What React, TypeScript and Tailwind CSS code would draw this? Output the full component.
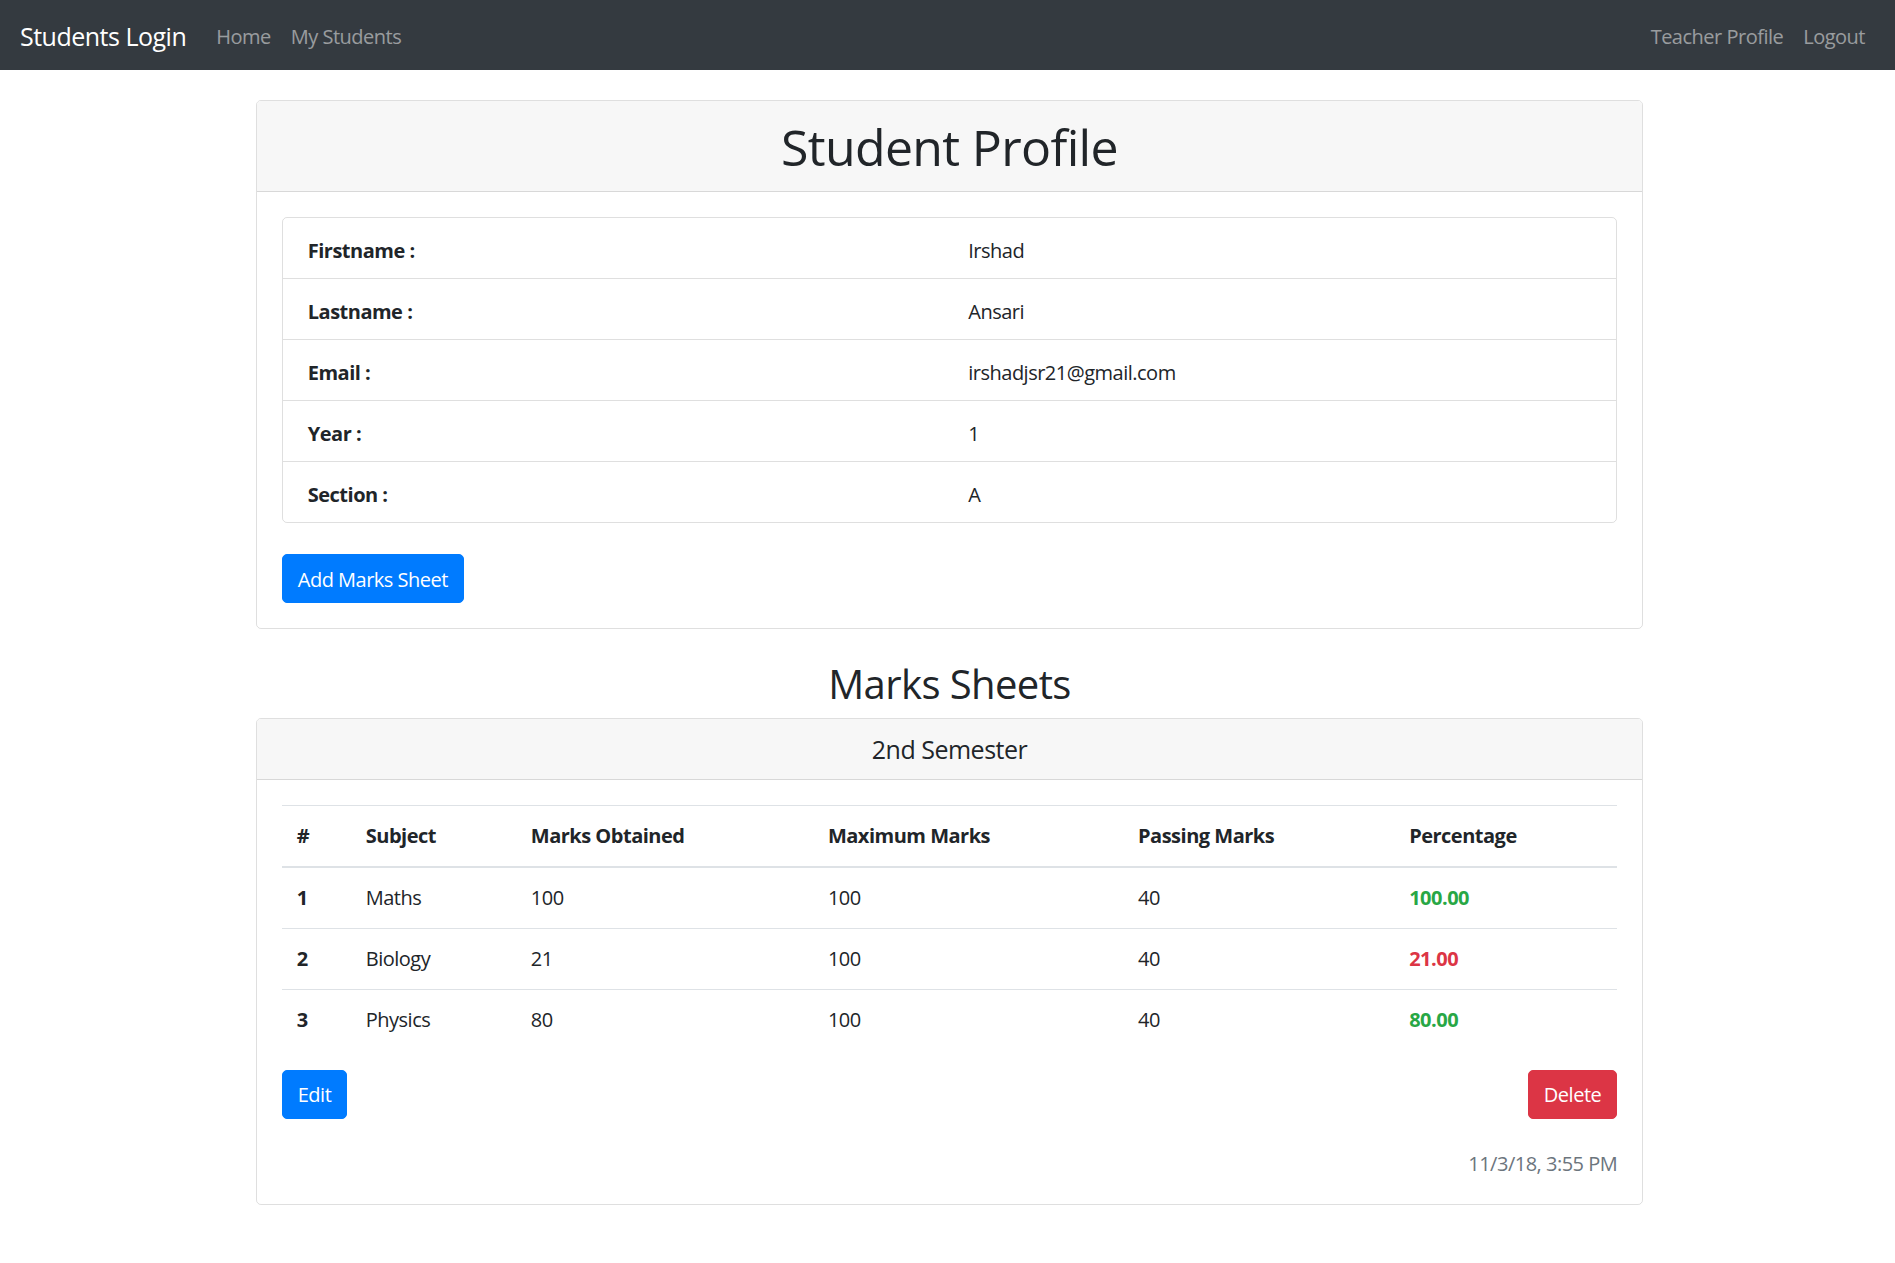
import React from "react";

const rows = [
  { label: "Firstname :", value: "Irshad" },
  { label: "Lastname :", value: "Ansari" },
  { label: "Email :", value: "irshadjsr21@gmail.com" },
  { label: "Year :", value: "1" },
  { label: "Section :", value: "A" },
];

const marks = [
  { n: "1", subject: "Maths", obtained: "100", max: "100", pass: "40", pct: "100.00", ok: true },
  { n: "2", subject: "Biology", obtained: "21", max: "100", pass: "40", pct: "21.00", ok: false },
  { n: "3", subject: "Physics", obtained: "80", max: "100", pass: "40", pct: "80.00", ok: true },
];

export default function App() {
  return (
    <div
      className="min-h-screen bg-white text-[#212529] text-[20px] leading-[30px] tracking-[-0.025em]"
      style={{ fontFamily: '"Segoe UI", "Open Sans", "Noto Sans", sans-serif' }}
    >
      <nav className="h-[70px] bg-[#343a40] px-[20px] pt-[4px] flex items-center justify-between">
        <div className="flex items-center">
          <span className="text-[25px] leading-[37.5px] text-white mr-[20px]">Students Login</span>
          <span className="px-[10px] text-white/50">Home</span>
          <span className="px-[10px] text-white/50">My Students</span>
        </div>
        <div className="flex items-center">
          <span className="px-[10px] text-white/50">Teacher Profile</span>
          <span className="px-[10px] text-white/50">Logout</span>
        </div>
      </nav>

      <div className="mx-auto max-w-[1425px] pl-[20.75px] pr-[16.75px]">
        <div className="mt-[30px] border border-black/[.125] rounded-[5px] overflow-hidden">
          <div className="bg-[#f7f7f7] px-[25px] pt-[16px] pb-[14px] border-b border-black/[.125]">
            <h1 className="text-[50px] leading-[60px] font-normal text-center tracking-[-0.013em]">Student Profile</h1>
          </div>
          <div className="p-[25px]">
            <div className="border border-black/[.125] rounded-[5px]">
              {rows.map((r, i) => (
                <div
                  key={r.label}
                  className={`flex px-[25px] pt-[17.5px] pb-[12.5px] ${i > 0 ? "border-t border-black/[.125]" : ""}`}
                >
                  <div className="w-1/2 font-bold">{r.label}</div>
                  <div className="w-1/2 pl-[18.75px]">{r.value}</div>
                </div>
              ))}
            </div>
            <button className="mt-[31px] bg-[#007bff] text-white rounded-[5px] px-[15px] pt-[9.5px] pb-[7.5px] border border-[#007bff]">
              Add Marks Sheet
            </button>
          </div>
        </div>

        <h2 className="mt-[31px] mb-[10px] text-[40px] leading-[48px] font-normal text-center tracking-[-0.015em]">Marks Sheets</h2>

        <div className="border border-black/[.125] rounded-[5px] overflow-hidden mb-[60px]">
          <div className="bg-[#f7f7f7] px-[25px] py-[15px] border-b border-black/[.125]">
            <h5 className="text-[25px] leading-[30px] font-normal text-center">2nd Semester</h5>
          </div>
          <div className="p-[25px]">
            <table className="w-full border-collapse table-fixed mb-[20px] text-left">
              <colgroup>
                <col className="w-[69px]" />
                <col className="w-[165px]" />
                <col className="w-[297px]" />
                <col className="w-[310px]" />
                <col className="w-[271px]" />
                <col className="w-[223px]" />
              </colgroup>
              <thead>
                <tr>
                  {["#", "Subject", "Marks Obtained", "Maximum Marks", "Passing Marks", "Percentage"].map((h) => (
                    <th
                      key={h}
                      className="p-[15px] font-bold border-t border-[#dee2e6] border-b-2 align-bottom"
                    >
                      {h}
                    </th>
                  ))}
                </tr>
              </thead>
              <tbody>
                {marks.map((m, i) => (
                  <tr key={m.n}>
                    <th className={`p-[15px] font-bold ${i > 0 ? "border-t border-[#dee2e6]" : ""}`}>{m.n}</th>
                    <td className={`p-[15px] ${i > 0 ? "border-t border-[#dee2e6]" : ""}`}>{m.subject}</td>
                    <td className={`p-[15px] ${i > 0 ? "border-t border-[#dee2e6]" : ""}`}>{m.obtained}</td>
                    <td className={`p-[15px] ${i > 0 ? "border-t border-[#dee2e6]" : ""}`}>{m.max}</td>
                    <td className={`p-[15px] ${i > 0 ? "border-t border-[#dee2e6]" : ""}`}>{m.pass}</td>
                    <td
                      className={`p-[15px] font-bold ${m.ok ? "text-[#28a745]" : "text-[#dc3545]"} ${
                        i > 0 ? "border-t border-[#dee2e6]" : ""
                      }`}
                    >
                      {m.pct}
                    </td>
                  </tr>
                ))}
              </tbody>
            </table>
            <div className="flex justify-between">
              <button className="bg-[#007bff] text-white rounded-[5px] px-[15px] py-[8.5px] border border-[#007bff]">
                Edit
              </button>
              <button className="bg-[#dc3545] text-white rounded-[5px] px-[15px] py-[8.5px] border border-[#dc3545]">
                Delete
              </button>
            </div>
            <div className="mt-[30px] text-right text-[#6c757d]">11/3/18, 3:55 PM</div>
          </div>
        </div>
      </div>
    </div>
  );
}
